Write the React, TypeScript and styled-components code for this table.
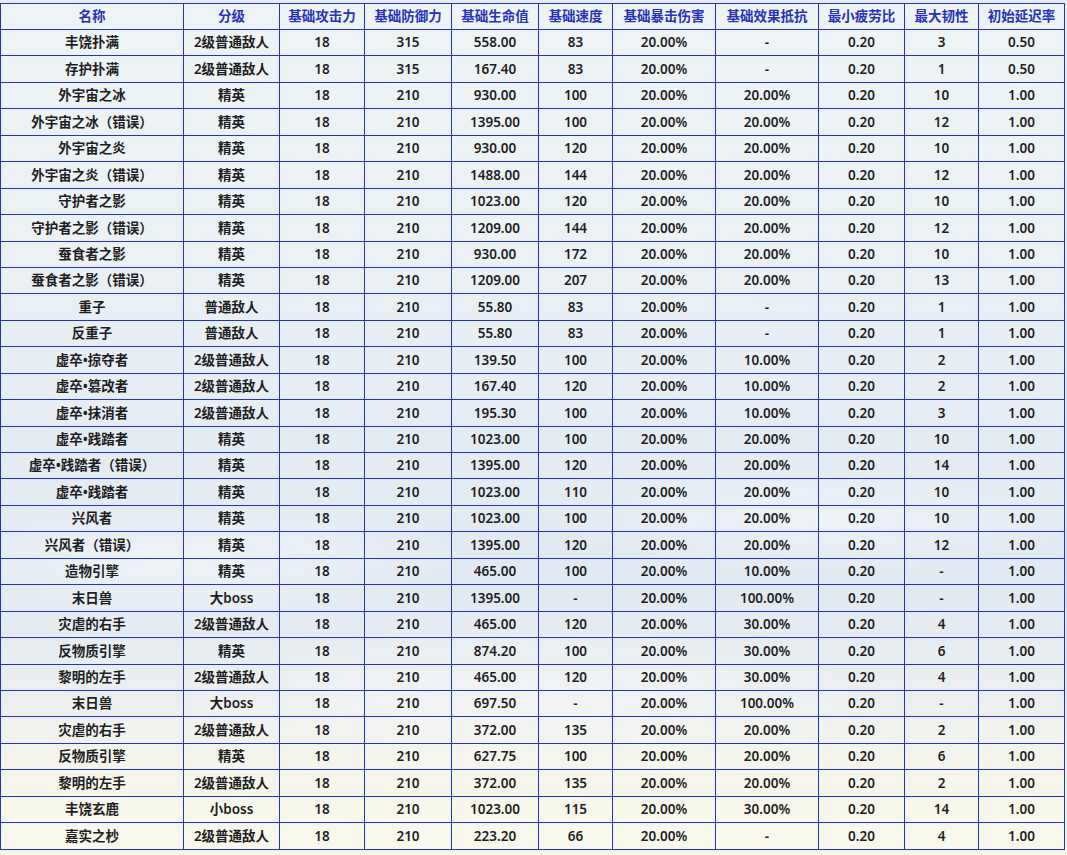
import React from "react";
import styled, { createGlobalStyle } from "styled-components";

const GlobalStyle = createGlobalStyle`
  html, body {
    margin: 0;
    padding: 0;
  }
  body {
    width: 1067px;
    height: 855px;
    overflow: hidden;
    font-family: "Noto Sans", "Noto Sans CJK SC", sans-serif;
    background:
      radial-gradient(ellipse 420px 90px at 180px 560px, rgba(255,255,255,0.45), rgba(255,255,255,0) 70%),
      radial-gradient(ellipse 380px 80px at 820px 520px, rgba(255,255,255,0.4), rgba(255,255,255,0) 70%),
      radial-gradient(ellipse 500px 120px at 520px 700px, rgba(255,255,255,0.35), rgba(255,255,255,0) 70%),
      linear-gradient(180deg, #e8eff2 0%, #e2ebf0 30%, #d8e3ee 55%, #d4e0ec 68%, #e4e9ea 82%, #f4f3e2 92%, #f6f5e6 100%);
  }
`;

const Page = styled.div`
  padding-top: 3px;
`;

const Table = styled.table`
  width: 1065px;
  table-layout: fixed;
  border-collapse: collapse;
  border: 1px solid #6068d4;
`;

const HeadCell = styled.th`
  height: 25px;
  padding: 0;
  border: 1px solid #2432c0;
  background: rgba(255, 255, 255, 0.3);
  color: #2a33b8;
  font-size: 13.5px;
  font-weight: 600;
  text-align: center;
  vertical-align: middle;
  white-space: nowrap;
  line-height: 1;
`;

const Cell = styled.td`
  height: 24.45px;
  padding: 1px 0 0;
  border: 1px solid #2432c0;
  background: rgba(255, 255, 255, 0.3);
  color: #1e1e22;
  font-size: 13.5px;
  font-weight: 600;
  text-align: center;
  vertical-align: middle;
  white-space: nowrap;
  line-height: 1;
`;

const widths = [183, 96, 85, 87, 87, 74, 103, 103, 86, 74, 86];

const headers = [
  "名称",
  "分级",
  "基础攻击力",
  "基础防御力",
  "基础生命值",
  "基础速度",
  "基础暴击伤害",
  "基础效果抵抗",
  "最小疲劳比",
  "最大韧性",
  "初始延迟率",
];

const raw = `丰饶扑满|2级普通敌人|18|315|558.00|83|20.00%|-|0.20|3|0.50
存护扑满|2级普通敌人|18|315|167.40|83|20.00%|-|0.20|1|0.50
外宇宙之冰|精英|18|210|930.00|100|20.00%|20.00%|0.20|10|1.00
外宇宙之冰（错误）|精英|18|210|1395.00|100|20.00%|20.00%|0.20|12|1.00
外宇宙之炎|精英|18|210|930.00|120|20.00%|20.00%|0.20|10|1.00
外宇宙之炎（错误）|精英|18|210|1488.00|144|20.00%|20.00%|0.20|12|1.00
守护者之影|精英|18|210|1023.00|120|20.00%|20.00%|0.20|10|1.00
守护者之影（错误）|精英|18|210|1209.00|144|20.00%|20.00%|0.20|12|1.00
蚕食者之影|精英|18|210|930.00|172|20.00%|20.00%|0.20|10|1.00
蚕食者之影（错误）|精英|18|210|1209.00|207|20.00%|20.00%|0.20|13|1.00
重子|普通敌人|18|210|55.80|83|20.00%|-|0.20|1|1.00
反重子|普通敌人|18|210|55.80|83|20.00%|-|0.20|1|1.00
虚卒•掠夺者|2级普通敌人|18|210|139.50|100|20.00%|10.00%|0.20|2|1.00
虚卒•篡改者|2级普通敌人|18|210|167.40|120|20.00%|10.00%|0.20|2|1.00
虚卒•抹消者|2级普通敌人|18|210|195.30|100|20.00%|10.00%|0.20|3|1.00
虚卒•践踏者|精英|18|210|1023.00|100|20.00%|20.00%|0.20|10|1.00
虚卒•践踏者（错误）|精英|18|210|1395.00|120|20.00%|20.00%|0.20|14|1.00
虚卒•践踏者|精英|18|210|1023.00|110|20.00%|20.00%|0.20|10|1.00
兴风者|精英|18|210|1023.00|100|20.00%|20.00%|0.20|10|1.00
兴风者（错误）|精英|18|210|1395.00|120|20.00%|20.00%|0.20|12|1.00
造物引擎|精英|18|210|465.00|100|20.00%|10.00%|0.20|-|1.00
末日兽|大boss|18|210|1395.00|-|20.00%|100.00%|0.20|-|1.00
灾虐的右手|2级普通敌人|18|210|465.00|120|20.00%|30.00%|0.20|4|1.00
反物质引擎|精英|18|210|874.20|100|20.00%|30.00%|0.20|6|1.00
黎明的左手|2级普通敌人|18|210|465.00|120|20.00%|30.00%|0.20|4|1.00
末日兽|大boss|18|210|697.50|-|20.00%|100.00%|0.20|-|1.00
灾虐的右手|2级普通敌人|18|210|372.00|135|20.00%|20.00%|0.20|2|1.00
反物质引擎|精英|18|210|627.75|100|20.00%|20.00%|0.20|6|1.00
黎明的左手|2级普通敌人|18|210|372.00|135|20.00%|20.00%|0.20|2|1.00
丰饶玄鹿|小boss|18|210|1023.00|115|20.00%|30.00%|0.20|14|1.00
嘉实之杪|2级普通敌人|18|210|223.20|66|20.00%|-|0.20|4|1.00`;

const rows = raw.split("\n").map((line) => line.split("|"));

export default function App() {
  return (
    <Page>
      <GlobalStyle />
      <Table>
        <colgroup>
          {widths.map((w, i) => (
            <col key={i} style={{ width: w }} />
          ))}
        </colgroup>
        <thead>
          <tr>
            {headers.map((h) => (
              <HeadCell key={h}>{h}</HeadCell>
            ))}
          </tr>
        </thead>
        <tbody>
          {rows.map((r, i) => (
            <tr key={i}>
              {r.map((c, j) => (
                <Cell key={j}>{c}</Cell>
              ))}
            </tr>
          ))}
        </tbody>
      </Table>
    </Page>
  );
}
